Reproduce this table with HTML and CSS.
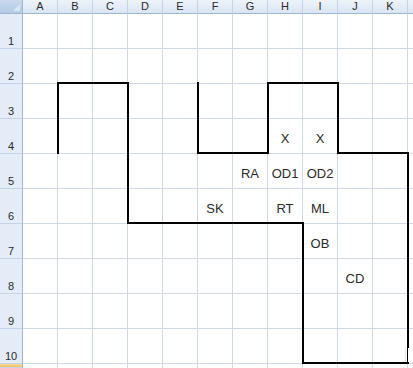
FILE: index.html
```
<!DOCTYPE html>
<html>
<head>
<meta charset="utf-8">
<link rel="stylesheet" href="styles.css">
</head>
<body>
<div class="sheet">
  <div class="corner"><span class="tri"></span></div>
  <div class="ch">A</div><div class="ch">B</div><div class="ch">C</div><div class="ch">D</div>
  <div class="ch">E</div><div class="ch">F</div><div class="ch">G</div><div class="ch">H</div>
  <div class="ch">I</div><div class="ch">J</div><div class="ch">K</div><div class="ch ch-last"></div>

  <div class="rh r1">1</div><div class="rh r2">2</div><div class="rh r3">3</div><div class="rh r4">4</div>
  <div class="rh r5">5</div><div class="rh r6">6</div><div class="rh r7">7</div><div class="rh r8">8</div>
  <div class="rh r9">9</div><div class="rh r10">10</div><div class="rh rh-sel"></div>

  <div class="grid-area"></div>

  <div class="cell c-h r4">X</div>
  <div class="cell c-i r4">X</div>
  <div class="cell c-g r5">RA</div>
  <div class="cell c-h r5">OD1</div>
  <div class="cell c-i r5">OD2</div>
  <div class="cell c-f r6">SK</div>
  <div class="cell c-h r6">RT</div>
  <div class="cell c-i r6">ML</div>
  <div class="cell c-i r7">OB</div>
  <div class="cell c-j r8">CD</div>

  <svg class="borders" width="413" height="368" viewBox="0 0 413 368">
    <g fill="#000">
      <rect x="57" y="82" width="2" height="72"/>
      <rect x="57" y="82" width="72" height="2"/>
      <rect x="127" y="82" width="2" height="142"/>
      <rect x="127" y="222" width="177" height="2"/>
      <rect x="302" y="222" width="2" height="142"/>
      <rect x="302" y="362" width="107" height="2"/>
      <rect x="407" y="152" width="2" height="212"/>
      <rect x="337" y="152" width="72" height="2"/>
      <rect x="337" y="82" width="2" height="72"/>
      <rect x="267" y="82" width="72" height="2"/>
      <rect x="267" y="82" width="2" height="72"/>
      <rect x="197" y="152" width="72" height="2"/>
      <rect x="197" y="82" width="2" height="72"/>
    </g>
    <rect x="408" y="348" width="1" height="14" fill="#fff"/>
    <rect x="405" y="348" width="1" height="14" fill="#e6e6e6"/>
  </svg>
</div>
</body>
</html>
```
FILE: styles.css
```
html, body {
  margin: 0;
  padding: 0;
  background: #fff;
}

.sheet {
  position: relative;
  width: 413px;
  height: 368px;
  overflow: hidden;
  display: grid;
  grid-template-columns: 23px repeat(11, 35px) 1fr;
  grid-template-rows: 14px repeat(10, 35px) 1fr;
  font-family: Arial, "Liberation Sans", sans-serif;
}

.corner {
  grid-column: 1;
  grid-row: 1;
  box-sizing: border-box;
  background: linear-gradient(#c9d9ee, #b4cae6);
  border-right: 1px solid #9eb6ce;
  border-bottom: 1px solid #9eb6ce;
  position: relative;
}

.tri {
  position: absolute;
  right: 2px;
  bottom: 2px;
  width: 0;
  height: 0;
  border-left: 7px solid transparent;
  border-bottom: 7px solid #dbe6f4;
}

.ch {
  grid-row: 1;
  box-sizing: border-box;
  background: linear-gradient(#eef3fa, #dae5f3);
  border-right: 1px solid #c5d3e6;
  border-bottom: 1px solid #9eb6ce;
  font-size: 11px;
  line-height: 13px;
  color: #2b2b2b;
  text-align: center;
}

.ch-last {
  border-right: none;
}

.rh {
  grid-column: 1;
  box-sizing: border-box;
  background: #e4ecf7;
  border-right: 1px solid #9eb6ce;
  border-bottom: 1px solid #c5d3e6;
  font-size: 11px;
  line-height: 13px;
  color: #2b2b2b;
  display: flex;
  align-items: flex-end;
  justify-content: center;
}

.rh-sel {
  grid-row: 12;
  background: linear-gradient(#f9d99f, #f1c15f);
  border-right: 1px solid #9eb6ce;
}

.grid-area {
  grid-column: 2 / -1;
  grid-row: 2 / -1;
  background-color: #fff;
  background-image:
    repeating-linear-gradient(to right, transparent 0 34px, #d0d7e5 34px 35px),
    repeating-linear-gradient(to bottom, transparent 0 34px, #d0d7e5 34px 35px);
}

.cell {
  box-sizing: border-box;
  width: 34px;
  display: flex;
  align-items: flex-end;
  justify-content: center;
  padding-bottom: 8px;
  font-size: 13px;
  line-height: 15px;
  color: #2a2a2a;
  white-space: nowrap;
}

.r1 { grid-row: 2; }
.r2 { grid-row: 3; }
.r3 { grid-row: 4; }
.r4 { grid-row: 5; }
.r5 { grid-row: 6; }
.r6 { grid-row: 7; }
.r7 { grid-row: 8; }
.r8 { grid-row: 9; }
.r9 { grid-row: 10; }
.r10 { grid-row: 11; }

.c-f { grid-column: 7; }
.c-g { grid-column: 8; }
.c-h { grid-column: 9; }
.c-i { grid-column: 10; }
.c-j { grid-column: 11; }

.borders {
  position: absolute;
  left: 0;
  top: 0;
  pointer-events: none;
}
```
